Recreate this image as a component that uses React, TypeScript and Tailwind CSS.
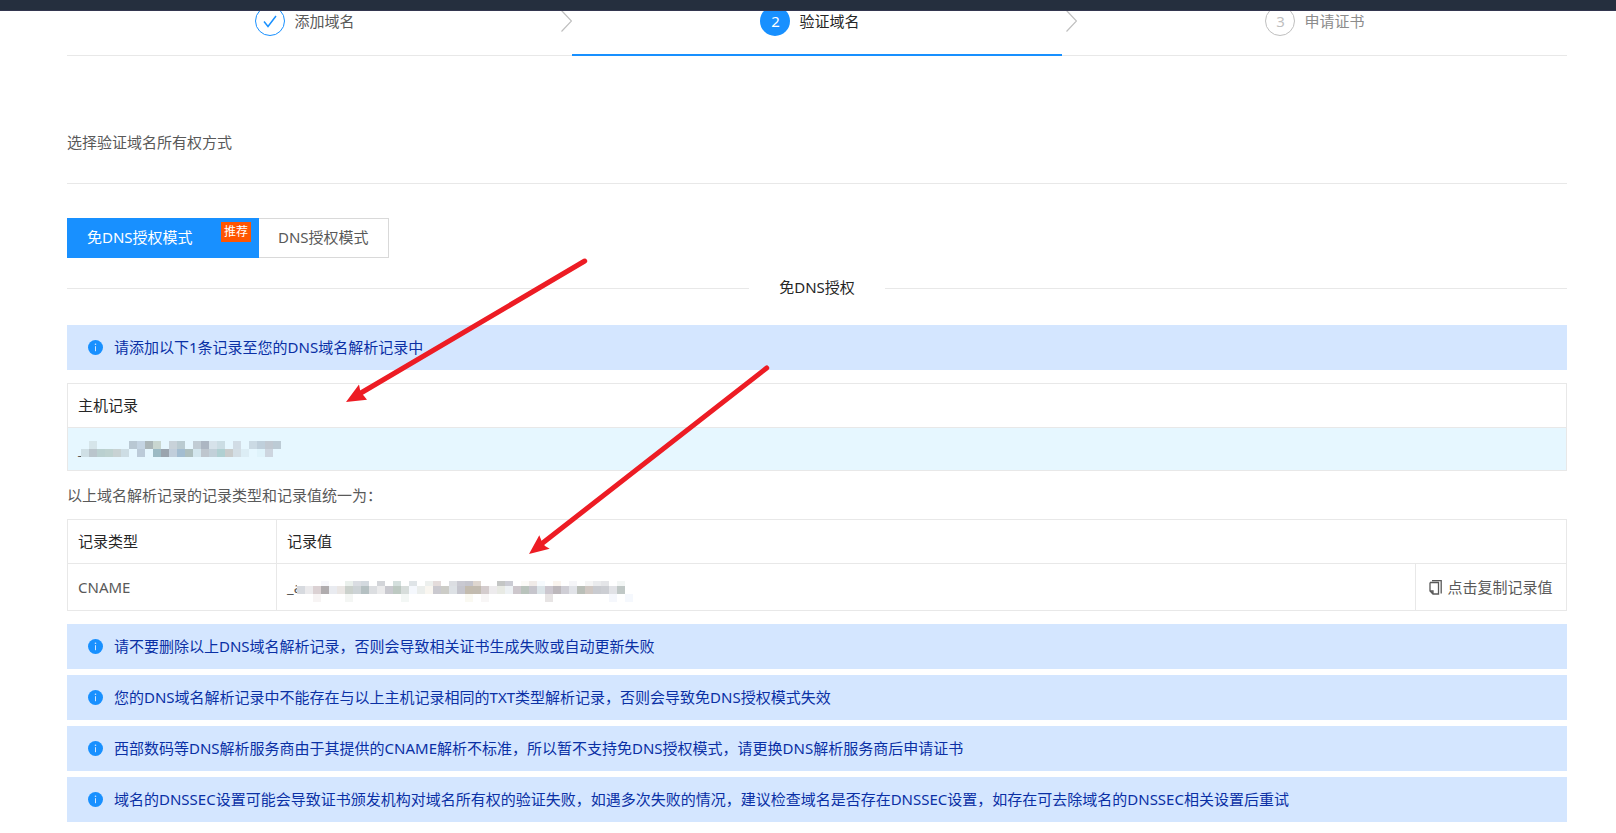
import React, { useState } from 'react';

interface Block {
    x: number;
    y: number;
    h: number;
    color: string;
}

interface MosaicProps {
    width: number;
    height: number;
    blocks: Block[];
    className?: string;
}

const hostTop = [
    '', '#d6e5ea', '', '', '', '', '#b9c8d3', '#c4d4e2', '#abb6b8', '#c9d6d0', '', '#c8d2d9', '#bacbd1', '',
    '#c1ccd4', '#acb6c2', '#d6e2ea', '#cbdde4', '', '#d1dce5', '', '#cbdae4', '#bfcfdb', '#c1c9d2', '#bccbd5',
];
const hostBottom = [
    '#cfdfe5', '#bac5cc', '#bad0d0', '#bed2d0', '#c8d2d3', '#cddde4', '', '#bccbd9', '', '#9cbac4', '#9aa4ae',
    '#c1cedb', '#a3bdd1', '#aebfbf', '#d3e6ee', '#bec6ce', '#c2d0d9', '#b0d0d2', '#c9cccc', '#d3dee5', '#dcedf5',
    '', '#dff3fb', '#cdd5df', '',
];
const valueTop = [
    '', '', '', '#f7f7fb', '', '', '#eaf0ec', '#dadde2', '#d3d9df', '', '#d3d5d9', '', '#d4dfdd', '', '#dfe4e7',
    '', '#edf0ee', '#e4dcdb', '', '#dcdee2', '#c9c9d1', '#c5c5cd', '#ded6cf', '', '', '#c4c6c5', '#cbccd4', '',
    '#fbfaf7', '#f0ebe8', '#f6fafd', '', '#faf4ee', '', '#f5f5f8', '', '#f5f5f5', '#eaebed', '#e4e5e8', '', '#f3f6f5', '',
];
const valueMiddle = [
    '#d7dadf', '#ebeaec', '#dbd1d3', '#b0acae', '#e9ebf0', '#eae6e4', '#cbd1cc', '#cdd3d6', '#b5c0c2', '#dcdee1',
    '#ebebec', '#c9c9cf', '#bdc9c2', '#d7dddb', '#f5f8fd', '#ebeeec', '#f9f6f0', '#cac9cf', '#ccccc7', '#dde1e5',
    '#c5c5cd', '#c3bbae', '#c2bbb0', '#d4cccd', '#edebed', '#e8eae4', '#edf1f4', '#cdc7cc', '#b9c3bc', '#c6c5cc',
    '#dbe4e8', '#ccc7cf', '#bdb8bc', '#cfced5', '#e1e3e8', '#babfb8', '#d0c8c3', '#c9cbd0', '#ccced3', '#e1e2e6',
    '#c0c8c6', '',
];
const valueBottom: Record<number, string> = {
    2: '#f7f4f4', 6: '#f4f6f4', 13: '#f3f7f5', 21: '#faf9f2', 23: '#f8f6f6', 31: '#e7e4e4', 39: '#f5f7fc', 41: '#f5f8fd',
};

const toBlocks = (colors: string[], y: number, h: number): Block[] =>
    colors.map((color, i) => ({ x: i * 8, y, h, color })).filter(block => block.color !== '');

const hostBlocks = [...toBlocks(hostTop, 0, 8), ...toBlocks(hostBottom, 8, 8)];
const valueBlocks = [
    ...toBlocks(valueTop, 3, 5),
    ...toBlocks(valueMiddle, 8, 8),
    ...Object.entries(valueBottom).map(([i, color]) => ({ x: Number(i) * 8, y: 16, h: 8, color })),
];

const warnings = [
    '请不要删除以上DNS域名解析记录，否则会导致相关证书生成失败或自动更新失败',
    '您的DNS域名解析记录中不能存在与以上主机记录相同的TXT类型解析记录，否则会导致免DNS授权模式失效',
    '西部数码等DNS解析服务商由于其提供的CNAME解析不标准，所以暂不支持免DNS授权模式，请更换DNS解析服务商后申请证书',
    '域名的DNSSEC设置可能会导致证书颁发机构对域名所有权的验证失败，如遇多次失败的情况，建议检查域名是否存在DNSSEC设置，如存在可去除域名的DNSSEC相关设置后重试',
];

function Mosaic({ width, height, blocks, className = '' }: MosaicProps) {
    return (
        <svg width={width} height={height} className={`shrink-0 overflow-visible ${className}`} shapeRendering="crispEdges" aria-hidden="true">
            {blocks.map(block => (
                <rect key={`${block.x}-${block.y}`} x={block.x} y={block.y} width="8" height={block.h} fill={block.color} />
            ))}
        </svg>
    );
}

function InfoAlert({ text }: { text: string }) {
    return (
        <div className="flex min-h-[45px] items-center bg-[#d4e6ff] pl-[21px] text-[#0a30a5]">
            <svg className="mr-[11px] shrink-0" width="15" height="15" viewBox="0 0 15 15" aria-hidden="true">
                <circle cx="7.5" cy="7.5" r="7.5" fill="#1890ff" />
                <circle cx="7.5" cy="4.2" r="0.8" fill="#d4e6ff" />
                <path d="M7.5 6.2v5" stroke="#d4e6ff" strokeWidth="1" />
            </svg>
            <p className="pb-0.5">{text}</p>
        </div>
    );
}

function StepArrow() {
    return (
        <svg className="mt-1 h-[22px] w-[11px]" viewBox="0 0 11 22" fill="none" stroke="#bfbfbf" strokeWidth="1.2" aria-hidden="true">
            <path d="M0.5 0.5L10.5 11L0.5 21.5" />
        </svg>
    );
}

function Steps() {
    return (
        <ol className="-mt-[5px] flex h-[50px] border-b border-[#e8e8e8]">
            <li className="flex flex-1 items-start justify-center pr-[14px]">
                <span className="flex size-[30px] items-center justify-center rounded-full border border-[#1890ff]">
                    <svg width="14" height="13" viewBox="0 0 14 13" fill="none" stroke="#1890ff" strokeWidth="1.5">
                        <path d="M1 6.5L5 11.5L13 1" />
                    </svg>
                </span>
                <span className="ml-[9px] leading-[30px] text-[#595959]">添加域名</span>
            </li>
            <li className="flex w-[15px] justify-end"><StepArrow /></li>
            <li className="flex h-[50px] flex-1 items-start justify-center border-b-2 border-[#1890ff] pr-[14px]" aria-current="step">
                <span className="flex size-[30px] items-center justify-center rounded-full bg-[#1890ff] text-white">2</span>
                <span className="ml-[9px] leading-[30px] text-[#262626]">验证域名</span>
            </li>
            <li className="flex w-[15px] justify-end"><StepArrow /></li>
            <li className="flex flex-1 items-start justify-center pr-[14px]">
                <span className="flex size-[30px] items-center justify-center rounded-full border border-[#bfbfbf] text-[#bfbfbf]">3</span>
                <span className="ml-[9px] leading-[30px] text-[#8c8c8c]">申请证书</span>
            </li>
        </ol>
    );
}

export default function App() {
    const [mode, setMode] = useState('cname');

    const tabClass = (active: boolean) =>
        active
            ? 'border border-[#1890ff] bg-[#1890ff] text-white'
            : 'border border-[#d9d9d9] bg-white text-[#595959]';

    return (
        <div className="relative min-h-screen overflow-hidden bg-white pb-[10px] font-['Noto_Sans','Noto_Sans_CJK_SC',sans-serif] text-[15px] leading-[22px] text-[#595959]">
            <header className="relative z-10 h-[11px] border-b border-[#33364f] bg-[#252f3e]" />

            <main className="mr-[49px] ml-[67px]">
                <Steps />

                <h2 className="mt-[75px] border-b border-[#e8e8e8] pb-[30px]">选择验证域名所有权方式</h2>

                <div className="mt-[34px] flex">
                    <button
                        type="button"
                        onClick={() => setMode('cname')}
                        className={`relative h-10 w-48 pb-0.5 pl-[19px] text-left ${tabClass(mode === 'cname')}`}
                    >
                        免DNS授权模式
                        <span className="absolute top-[3px] right-[7px] h-5 bg-[#ff5500] px-[3px] text-xs leading-5 text-white">推荐</span>
                    </button>
                    <button
                        type="button"
                        onClick={() => setMode('dns')}
                        className={`h-10 border-l-0 px-[19px] pb-0.5 ${tabClass(mode === 'dns')}`}
                    >
                        DNS授权模式
                    </button>
                </div>

                <div className="mt-5 flex items-center gap-[30px] text-[#262626]">
                    <span className="h-px flex-1 bg-[#e8e8e8]" />
                    <h3 className="-mt-0.5">免DNS授权</h3>
                    <span className="h-px flex-1 bg-[#e8e8e8]" />
                </div>

                <div className="mt-[27px]">
                    <InfoAlert text="请添加以下1条记录至您的DNS域名解析记录中" />
                </div>

                <table className="mt-[13px] w-full border-collapse border border-[#e8e8e8]">
                    <thead>
                        <tr className="h-11">
                            <th className="px-[10px] pt-0 pb-0.5 text-left font-normal text-[#262626]">主机记录</th>
                        </tr>
                    </thead>
                    <tbody>
                        <tr className="h-[43px] border-t border-[#e8e8e8] bg-[#e6f7ff]">
                            <td className="px-[10px]">
                                <div className="flex items-center">
                                    <span className="w-[3px]">_</span>
                                    <Mosaic width={201} height={16} blocks={hostBlocks} />
                                </div>
                            </td>
                        </tr>
                    </tbody>
                </table>

                <p className="mt-[13px]">以上域名解析记录的记录类型和记录值统一为：</p>

                <table className="mt-[13px] w-full border-collapse border border-[#e8e8e8]">
                    <thead>
                        <tr className="h-11 text-left text-[#262626]">
                            <th className="w-[209px] border border-[#e8e8e8] px-[10px] pb-0.5 font-normal">记录类型</th>
                            <th colSpan={2} className="border border-[#e8e8e8] px-[10px] pb-0.5 font-normal">记录值</th>
                        </tr>
                    </thead>
                    <tbody>
                        <tr className="h-[47px]">
                            <td className="border border-[#e8e8e8] px-[10px]">CNAME</td>
                            <td className="border border-[#e8e8e8] px-[10px]">
                                <div className="flex items-center">
                                    <span className="w-[10px]">_a</span>
                                    <Mosaic width={336} height={18} blocks={valueBlocks} className="bg-white" />
                                </div>
                            </td>
                            <td className="w-[151px] border border-[#e8e8e8] border-l-[#d9d9d9]">
                                <button type="button" className="flex w-full items-center justify-center gap-[5px]">
                                    <svg width="13" height="15" viewBox="0 0 13 15" fill="none" stroke="#595959" aria-hidden="true">
                                        <path d="M1 2.5H9.5V14H4L1 11V2.5M1 11H4V14M3 0.7H12.2V13.5" strokeWidth="1.3" />
                                    </svg>
                                    点击复制记录值
                                </button>
                            </td>
                        </tr>
                    </tbody>
                </table>

                <div className="mt-[13px] flex flex-col gap-[6px]">
                    {warnings.map(text => (
                        <InfoAlert key={text} text={text} />
                    ))}
                </div>
            </main>

            {/* Red arrows pointing at the two records */}
            <svg className="pointer-events-none absolute top-[250px] left-[330px]" width="450" height="315" viewBox="330 250 450 315" fill="#ed1c24" stroke="#ed1c24" aria-hidden="true">
                <path d="M584.7 261L360 393.5M766.7 368L542 543.5" strokeWidth="5" strokeLinecap="round" />
                <path d="M346 402L359 384.5L360.5 392L364 396L367 399.7ZM529 554L539.3 535.3L542 542L545 546L549.7 548.7Z" stroke="none" />
            </svg>
        </div>
    );
}
